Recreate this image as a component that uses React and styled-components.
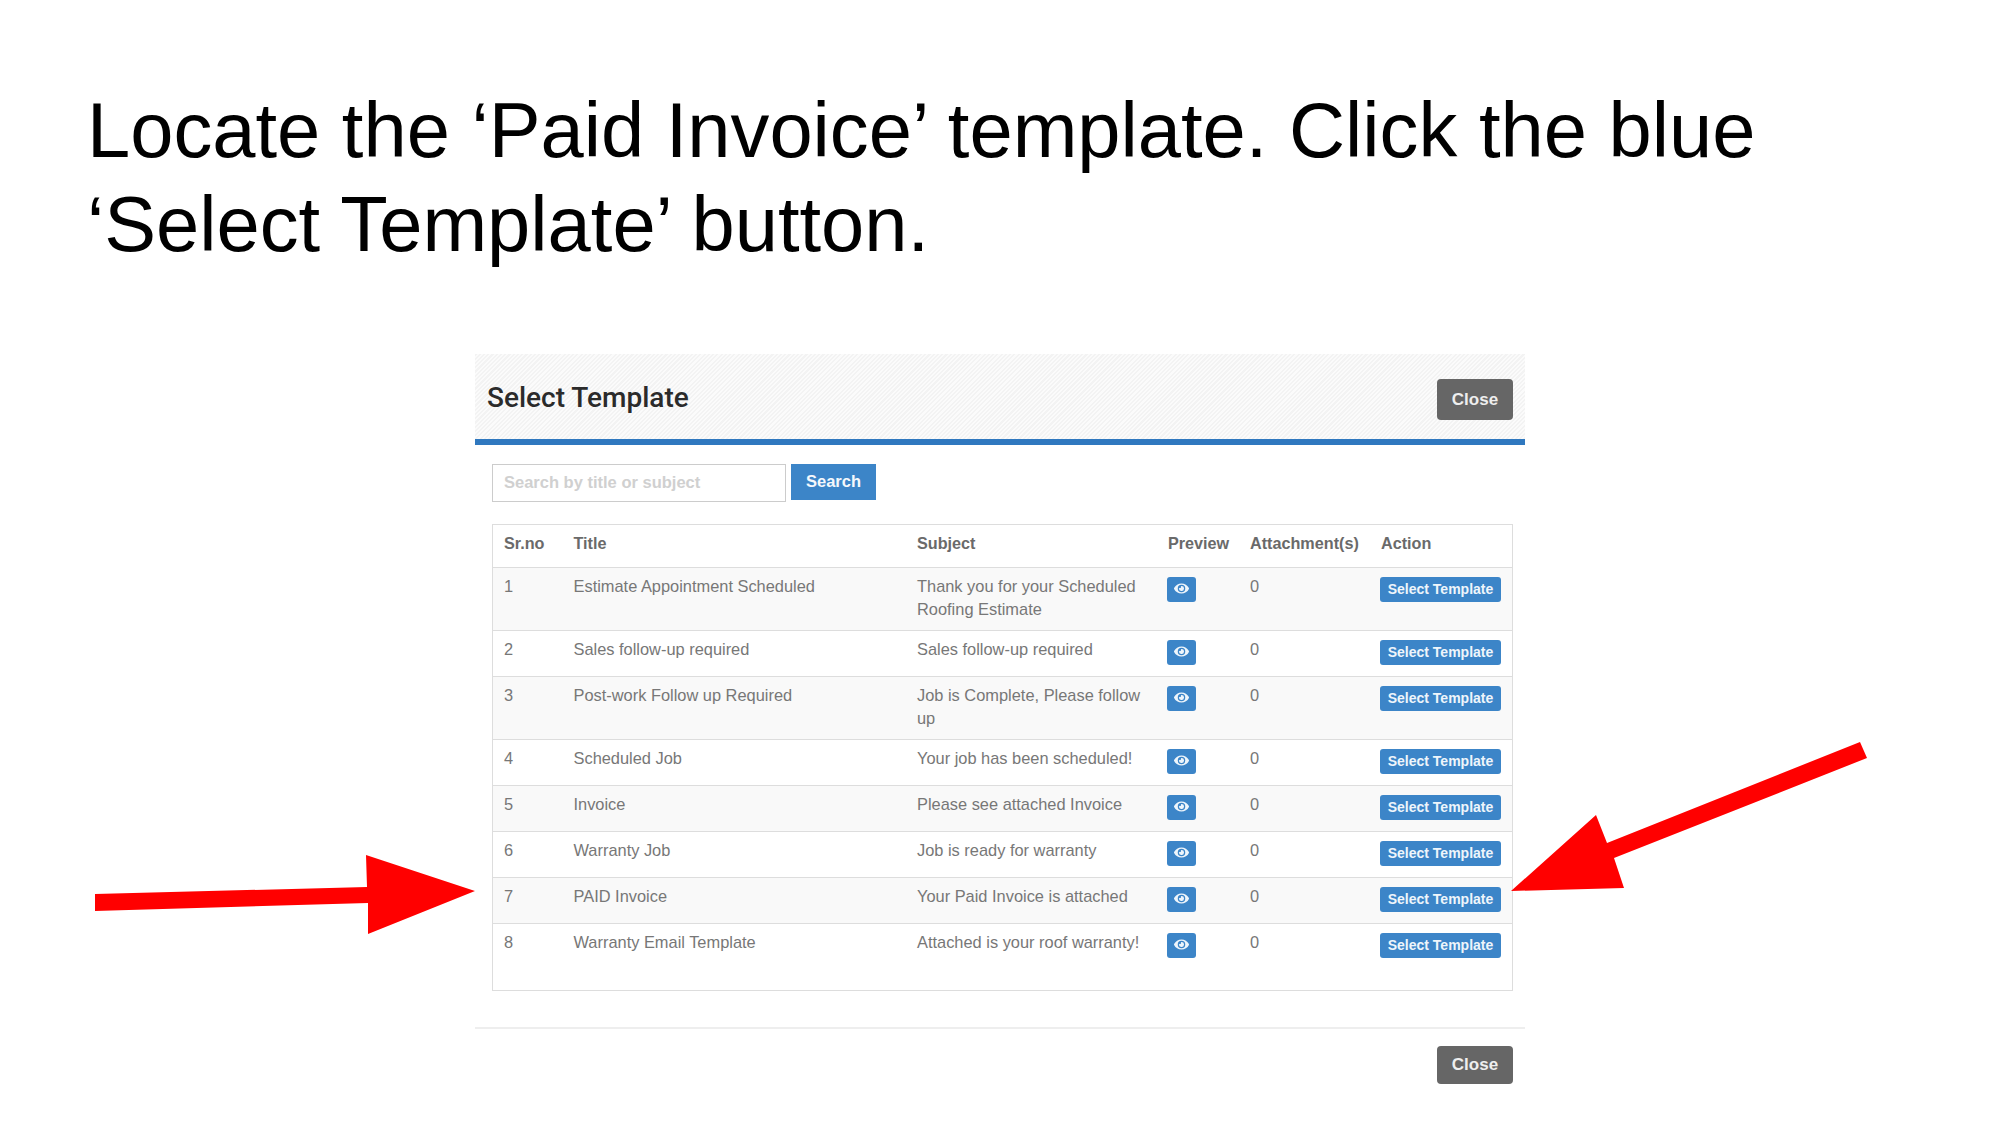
import React from 'react';
import styled, { createGlobalStyle } from 'styled-components';
import { FaEye } from 'react-icons/fa';

const blue = '#3c85c8';

const GlobalStyle = createGlobalStyle`
  html, body {
    margin: 0;
    background: #fff;
  }
  body {
    font-family: "Liberation Sans", Arial, sans-serif;
  }
`;

const Slide = styled.div`
  position: relative;
  width: 2000px;
  height: 1125px;
  overflow: hidden;
  background: #fff;
`;

const Heading = styled.h1`
  margin: 0;
  padding: 83px 0 0 87px;
  max-width: 1800px;
  font-size: 77.7px;
  line-height: 94px;
  font-weight: 400;
  color: #000;
`;

const Modal = styled.div`
  width: 1050px;
  margin: 0 0 0 475px;
  padding-top: 83px;
`;

const ModalHeader = styled.div`
  display: flex;
  align-items: center;
  justify-content: space-between;
  height: 85px;
  padding: 0 12px;
  border-bottom: 6px solid #2f78bf;
  background: repeating-linear-gradient(135deg, #f3f3f3 0 1.5px, #fbfbfb 1.5px 3px);
`;

const ModalTitle = styled.h2`
  margin: 1px 0 0;
  font-family: Roboto, "Liberation Sans", sans-serif;
  font-size: 28px;
  font-weight: 500;
  color: #2b2b2b;
`;

const CloseButton = styled.button`
  width: 76px;
  height: ${p => p.$tall ? 41 : 38}px;
  margin-top: ${p => p.$tall ? 6 : 0}px;
  padding: 0;
  border: 0;
  border-radius: 4px;
  background: #666;
  color: #eee;
  font: bold 17px "Liberation Sans", sans-serif;
`;

const ModalBody = styled.div`
  padding: 19px 12px 36px 17px;
`;

const SearchRow = styled.div`
  display: flex;
  align-items: flex-start;
  gap: 5px;
  margin-bottom: 22px;
`;

const SearchInput = styled.input`
  box-sizing: border-box;
  width: 294px;
  height: 38px;
  padding: 0 11px 2px;
  border: 1px solid #ccc;
  background: #fff;
  font: bold 16.5px "Liberation Sans", sans-serif;

  &::placeholder {
    color: #d0d0d0;
    opacity: 1;
  }
`;

const SearchButton = styled.button`
  width: 85px;
  height: 36px;
  padding: 0 0 2px;
  border: 0;
  background: ${blue};
  color: #f4f8fc;
  font: bold 16.5px "Liberation Sans", sans-serif;
`;

const TableFrame = styled.div`
  border: 1px solid #ddd;
  padding-bottom: 21px;
`;

const Table = styled.table`
  width: 100%;
  table-layout: fixed;
  border-collapse: collapse;
  font-size: 16.4px;
  line-height: 23px;
  color: #777;
`;

const Col = styled.col`
  width: ${p => p.$w}px;
`;

const HeadCell = styled.th`
  height: 42px;
  box-sizing: border-box;
  padding: 0 0 4px 11px;
  text-align: left;
  font-weight: bold;
  font-size: 16.2px;
  color: #6a6a6a;
  white-space: nowrap;
`;

const Row = styled.tr`
  border-top: 1px solid #ddd;
  background: ${p => p.$odd ? '#f9f9f9' : '#fff'};
`;

const Cell = styled.td`
  height: 46px;
  box-sizing: border-box;
  padding: 7.5px 11px 8.5px 11px;
  vertical-align: top;
`;

const ActionCell = styled(Cell)`
  padding: 9px 0 0 10px;
`;

const SmallButton = styled.button`
  display: flex;
  align-items: center;
  justify-content: center;
  width: ${p => p.$w}px;
  height: 25px;
  padding: 0 0 1px;
  border: 0;
  border-radius: 3px;
  background: ${blue};
  color: #eef5fb;
  font: bold 14px "Liberation Sans", sans-serif;
`;

const ModalFooter = styled.div`
  display: flex;
  justify-content: flex-end;
  padding: 17px 12px 0;
  border-top: 2px solid #eee;
`;

const Arrows = styled.svg`
  position: absolute;
  left: 0;
  top: 0;
  pointer-events: none;
`;

const templates = [
  ['Estimate Appointment Scheduled', 'Thank you for your Scheduled Roofing Estimate'],
  ['Sales follow-up required', 'Sales follow-up required'],
  ['Post-work Follow up Required', 'Job is Complete, Please follow up'],
  ['Scheduled Job', 'Your job has been scheduled!'],
  ['Invoice', 'Please see attached Invoice'],
  ['Warranty Job', 'Job is ready for warranty'],
  ['PAID Invoice', 'Your Paid Invoice is attached'],
  ['Warranty Email Template', 'Attached is your roof warranty!'],
];

export default function App() {
  return (
    <Slide>
      <GlobalStyle />
      <Heading>Locate the ‘Paid Invoice’ template. Click the blue ‘Select Template’ button.</Heading>
      <Modal>
        <ModalHeader>
          <ModalTitle>Select Template</ModalTitle>
          <CloseButton $tall>Close</CloseButton>
        </ModalHeader>
        <ModalBody>
          <SearchRow>
            <SearchInput placeholder="Search by title or subject" />
            <SearchButton>Search</SearchButton>
          </SearchRow>
          <TableFrame>
            <Table>
              <colgroup>
                <Col $w={69.5} />
                <Col $w={343.5} />
                <Col $w={251} />
                <Col $w={82} />
                <Col $w={131} />
                <Col $w={142} />
              </colgroup>
              <thead>
                <tr>
                  <HeadCell>Sr.no</HeadCell>
                  <HeadCell>Title</HeadCell>
                  <HeadCell>Subject</HeadCell>
                  <HeadCell>Preview</HeadCell>
                  <HeadCell>Attachment(s)</HeadCell>
                  <HeadCell>Action</HeadCell>
                </tr>
              </thead>
              <tbody>
                {templates.map(([title, subject], i) => (
                  <Row key={title} $odd={i % 2 === 0}>
                    <Cell>{i + 1}</Cell>
                    <Cell>{title}</Cell>
                    <Cell>{subject}</Cell>
                    <ActionCell>
                      <SmallButton $w={29}><FaEye size={15} /></SmallButton>
                    </ActionCell>
                    <Cell>0</Cell>
                    <ActionCell>
                      <SmallButton $w={121}>Select Template</SmallButton>
                    </ActionCell>
                  </Row>
                ))}
              </tbody>
            </Table>
          </TableFrame>
        </ModalBody>
        <ModalFooter>
          <CloseButton>Close</CloseButton>
        </ModalFooter>
      </Modal>
      <Arrows width="2000" height="1125" viewBox="0 0 2000 1125">
        <polygon fill="#ff0000" points="95,894 367,887 366,855 475,891 368,934 368,903 95,911" />
        <polygon fill="#ff0000" points="1860,742 1867,758 1614,858 1624,888 1511,891 1596,815 1607,843" />
      </Arrows>
    </Slide>
  );
}
